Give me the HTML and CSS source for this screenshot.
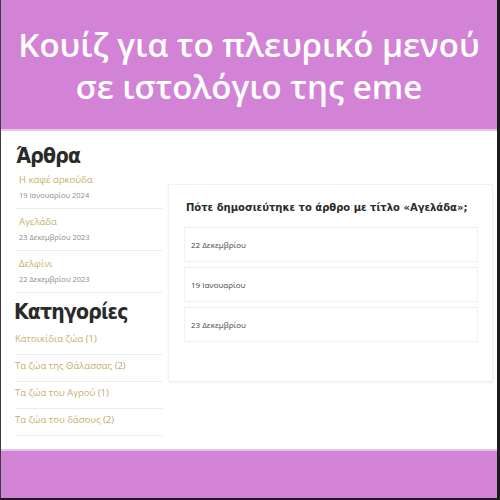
FILE: index.html
```html
<!DOCTYPE html>
<html lang="el">
<head>
<meta charset="utf-8">
<link rel="stylesheet" href="styles.css">
</head>
<body>
<div class="frame">
  <header class="banner">
    <h1 class="banner-title">Κουίζ για το πλευρικό μενού<br>σε ιστολόγιο της eme</h1>
  </header>
  <main class="content">
    <aside class="sidebar">
      <h2 class="side-heading">Άρθρα</h2>
      <ul class="post-list">
        <li class="post"><span class="link">Η καφέ αρκούδα</span><span class="date">19 Ιανουαρίου 2024</span></li>
        <li class="post"><span class="link">Αγελάδα</span><span class="date">23 Δεκεμβρίου 2023</span></li>
        <li class="post"><span class="link">Δελφίνι</span><span class="date">22 Δεκεμβρίου 2023</span></li>
      </ul>
      <h2 class="side-heading cat-heading">Κατηγορίες</h2>
      <ul class="cat-list">
        <li class="cat"><span class="link">Κατοικίδια ζώα</span> (1)</li>
        <li class="cat"><span class="link">Τα ζώα της Θάλασσας</span> (2)</li>
        <li class="cat"><span class="link">Τα ζώα του Αγρού</span> (1)</li>
        <li class="cat"><span class="link">Τα ζώα του δάσους</span> (2)</li>
      </ul>
    </aside>
    <section class="quiz">
      <p class="question">Πότε δημοσιεύτηκε το άρθρο με τίτλο «Αγελάδα»;</p>
      <div class="option">22 Δεκεμβρίου</div>
      <div class="option">19 Ιανουαρίου</div>
      <div class="option">23 Δεκεμβρίου</div>
    </section>
  </main>
  <footer class="bottom-band"></footer>
</div>
</body>
</html>
```
FILE: styles.css
```css
* { box-sizing: border-box; }
html, body { margin: 0; padding: 0; }
body {
  width: 500px;
  height: 500px;
  background: #1b1b1b;
  font-family: "Open Sans", "Noto Sans", sans-serif;
}
.frame {
  width: 500px;
  height: 500px;
  border-left: 1px solid #3a3a3a;
  border-right: 3px solid #1b1b1b;
  border-bottom: 2px solid #1b1b1b;
  background: #ffffff;
  display: flex;
  flex-direction: column;
}
.banner {
  height: 131px;
  background: #d383d5;
  display: flex;
  align-items: center;
  justify-content: center;
  border-bottom: 2px solid #e9c7ea;
}
.banner-title {
  margin: 0;
  padding-top: 2px;
  color: #ffffff;
  font-weight: 600;
  font-size: 33px;
  line-height: 42px;
  text-align: center;
}
.content {
  flex: 1;
  display: flex;
  align-items: flex-start;
  padding: 10px 4px 0 14px;
  gap: 5px;
}
.sidebar {
  width: 148px;
  flex: none;
}
.side-heading {
  margin: 0;
  font-family: "DejaVu Sans Condensed", "DejaVu Sans", sans-serif;
  font-weight: bold;
  font-size: 21px;
  letter-spacing: -0.8px;
  line-height: 30px;
  color: #2a2a2a;
  padding-left: 1px;
}
.cat-heading {
  font-size: 21px;
  line-height: 30px;
  margin-top: 1px;
  margin-bottom: 3px;
  margin-left: -2px;
}
.post-list, .cat-list {
  list-style: none;
  margin: 0;
  padding: 0;
}
.post {
  display: flex;
  flex-direction: column;
  border-bottom: 1px solid #ececec;
  padding: 1px 0 6px 4px;
  margin-bottom: 4px;
}
.link {
  color: #c4b06c;
}
.post .link {
  font-size: 9.5px;
  line-height: 16px;
}
.date {
  font-size: 7.5px;
  line-height: 14px;
  color: #8a8a8a;
}
.cat {
  font-size: 9.5px;
  line-height: 14px;
  color: #b8a86a;
  padding: 4px 0 8px 0;
  border-bottom: 1px solid #ececec;
}
.cat:first-child { padding-top: 2px; }
.quiz {
  flex: 1;
  margin-top: 43px;
  height: 198px;
  border: 1px solid #f0f0f0;
  box-shadow: 0 1px 2px rgba(0,0,0,0.06);
  padding: 15px 14px 0 15px;
}
.question {
  margin: 0 0 11px 2px;
  font-family: "DejaVu Sans", sans-serif;
  font-weight: bold;
  font-size: 10px;
  line-height: 16px;
  color: #2a2a2a;
}
.option {
  height: 35px;
  border: 1px solid #f1f1f1;
  margin-bottom: 5px;
  padding-left: 6px;
  display: flex;
  align-items: center;
  font-size: 8px;
  color: #444;
}
.bottom-band {
  height: 49px;
  flex: none;
  background: #d383d5;
  border-top: 2px solid #e6c2e8;
}
```
